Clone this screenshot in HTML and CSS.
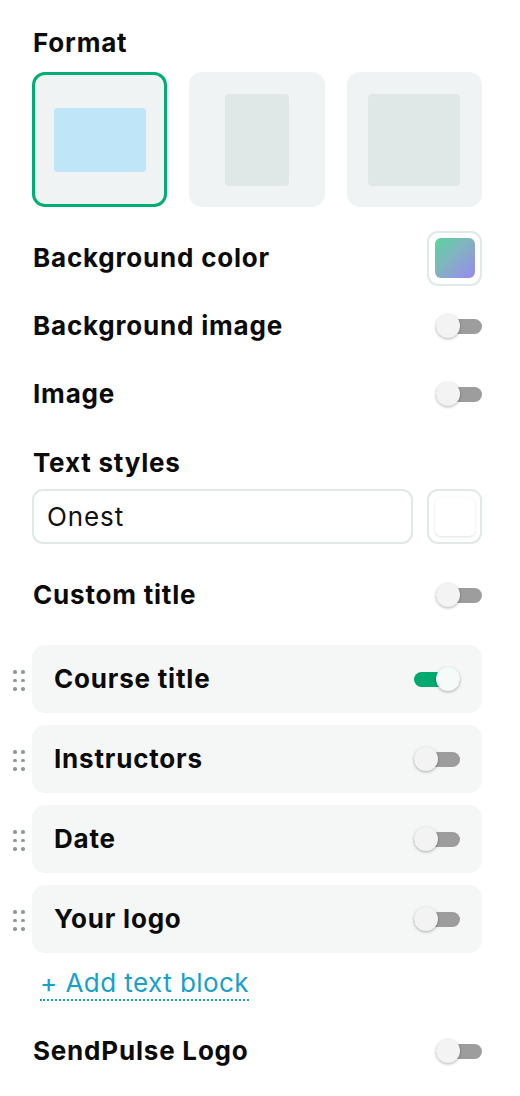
FILE: index.html
```html
<!DOCTYPE html>
<html lang="en">
<head>
<meta charset="utf-8">
<link rel="stylesheet" href="styles.css">
</head>
<body>
<div class="panel">
  <div class="title">Format</div>
  <div class="formats">
    <div class="tile selected"><div class="shape landscape"></div></div>
    <div class="tile"><div class="shape portrait"></div></div>
    <div class="tile"><div class="shape square"></div></div>
  </div>

  <div class="row row-color">
    <span class="label">Background color</span>
    <span class="swatch-box"><span class="swatch gradient"></span></span>
  </div>
  <div class="row">
    <span class="label">Background image</span>
    <span class="switch"></span>
  </div>
  <div class="row">
    <span class="label">Image</span>
    <span class="switch"></span>
  </div>

  <div class="title text-title">Text styles</div>
  <div class="font-row">
    <div class="font-input">Onest</div>
    <span class="swatch-box"><span class="swatch white"></span></span>
  </div>

  <div class="row row-custom">
    <span class="label">Custom title</span>
    <span class="switch"></span>
  </div>

  <div class="blocks">
    <div class="block">
      <span class="handle"><i></i><i></i><i></i><i></i><i></i><i></i></span>
      <span class="label">Course title</span>
      <span class="switch on"></span>
    </div>
    <div class="block">
      <span class="handle"><i></i><i></i><i></i><i></i><i></i><i></i></span>
      <span class="label">Instructors</span>
      <span class="switch"></span>
    </div>
    <div class="block">
      <span class="handle"><i></i><i></i><i></i><i></i><i></i><i></i></span>
      <span class="label">Date</span>
      <span class="switch"></span>
    </div>
    <div class="block">
      <span class="handle"><i></i><i></i><i></i><i></i><i></i><i></i></span>
      <span class="label">Your logo</span>
      <span class="switch"></span>
    </div>
  </div>

  <div class="add-row"><a class="add-link">+ Add text block</a></div>

  <div class="row row-logo">
    <span class="label">SendPulse Logo</span>
    <span class="switch"></span>
  </div>
</div>
</body>
</html>
```

FILE: styles.css
```css
* { box-sizing: border-box; }
html, body { margin: 0; padding: 0; background: #fff; }
body {
  font-family: Inter, "Noto Sans", "DejaVu Sans", sans-serif;
  color: #0b0b0b;
}
.panel {
  width: 520px;
  padding: 27px 38px 0 32px;
}
.title, .label {
  font-size: 26px;
  font-weight: 700;
  line-height: 32px;
  letter-spacing: 0.8px;
  padding-left: 1px;
}
.formats {
  margin-top: 13px;
  display: grid;
  grid-template-columns: repeat(3, 1fr);
  gap: 22px;
}
.tile {
  height: 135px;
  background: #eff3f3;
  border-radius: 13px;
  display: flex;
  align-items: center;
  justify-content: center;
}
.tile.selected {
  border: 3px solid #00ad73;
}
.shape { border-radius: 4px; background: #e0e8e7; }
.shape.landscape { width: 92px; height: 64px; background: #bfe6f8; }
.shape.portrait { width: 64px; height: 92px; }
.shape.square { width: 92px; height: 92px; }

.row {
  height: 68px;
  display: flex;
  align-items: center;
  justify-content: space-between;
}
.row-color { margin-top: 17px; }

.swatch-box {
  width: 55px;
  height: 55px;
  border: 2px solid #e1e9e7;
  border-radius: 11px;
  display: flex;
  align-items: center;
  justify-content: center;
  flex: none;
}
.swatch {
  width: 40px;
  height: 40px;
  border-radius: 6px;
}
.swatch.gradient {
  background: linear-gradient(135deg, #5ad59a 0%, #84b0c4 50%, #9a88f2 100%);
}
.swatch.white {
  height: 38px;
  background: #fff;
  box-shadow: 0 1px 3px rgba(0, 0, 0, 0.12);
}

.switch {
  position: relative;
  width: 46px;
  height: 15px;
  border-radius: 8px;
  background: #9d9d9d;
  flex: none;
}
.switch::after {
  content: "";
  position: absolute;
  left: 0;
  top: 50%;
  width: 24px;
  height: 24px;
  margin-top: -12px;
  border-radius: 50%;
  background: #f3f3f3;
  box-shadow: 0 1px 3px rgba(0, 0, 0, 0.3);
}
.switch.on { background: #00a96f; }
.switch.on::after { left: 22px; background: #f5fbf9; }

.text-title { margin-top: 19px; }
.font-row {
  margin-top: 10px;
  display: flex;
  gap: 14px;
}
.font-input {
  flex: 1;
  height: 55px;
  border: 2px solid #e1e9e7;
  border-radius: 11px;
  padding-left: 13px;
  font-size: 26px;
  letter-spacing: 0.9px;
  line-height: 51px;
  color: #111;
}
.row-custom { margin-top: 17px; }

.blocks {
  margin-top: 16px;
  display: flex;
  flex-direction: column;
  gap: 12px;
}
.block {
  position: relative;
  height: 68px;
  background: #f5f7f6;
  border-radius: 13px;
  display: flex;
  align-items: center;
  justify-content: space-between;
  padding: 0 22px 0 21px;
}
.handle {
  position: absolute;
  left: -19px;
  top: 50%;
  margin-top: -9px;
  display: grid;
  grid-template-columns: 3px 3px;
  column-gap: 5px;
  row-gap: 5px;
}
.handle i {
  display: block;
  width: 3.5px;
  height: 3.5px;
  border-radius: 50%;
  background: #8c9a9b;
}

.add-row { margin-top: 14px; padding-left: 8px; }
.add-link {
  display: inline-block;
  font-size: 26px;
  line-height: 32px;
  color: #16a1c8;
  border-bottom: 2px dotted #16a1c8;
  letter-spacing: 0.45px;
}
.row-logo { margin-top: 16px; }
```
